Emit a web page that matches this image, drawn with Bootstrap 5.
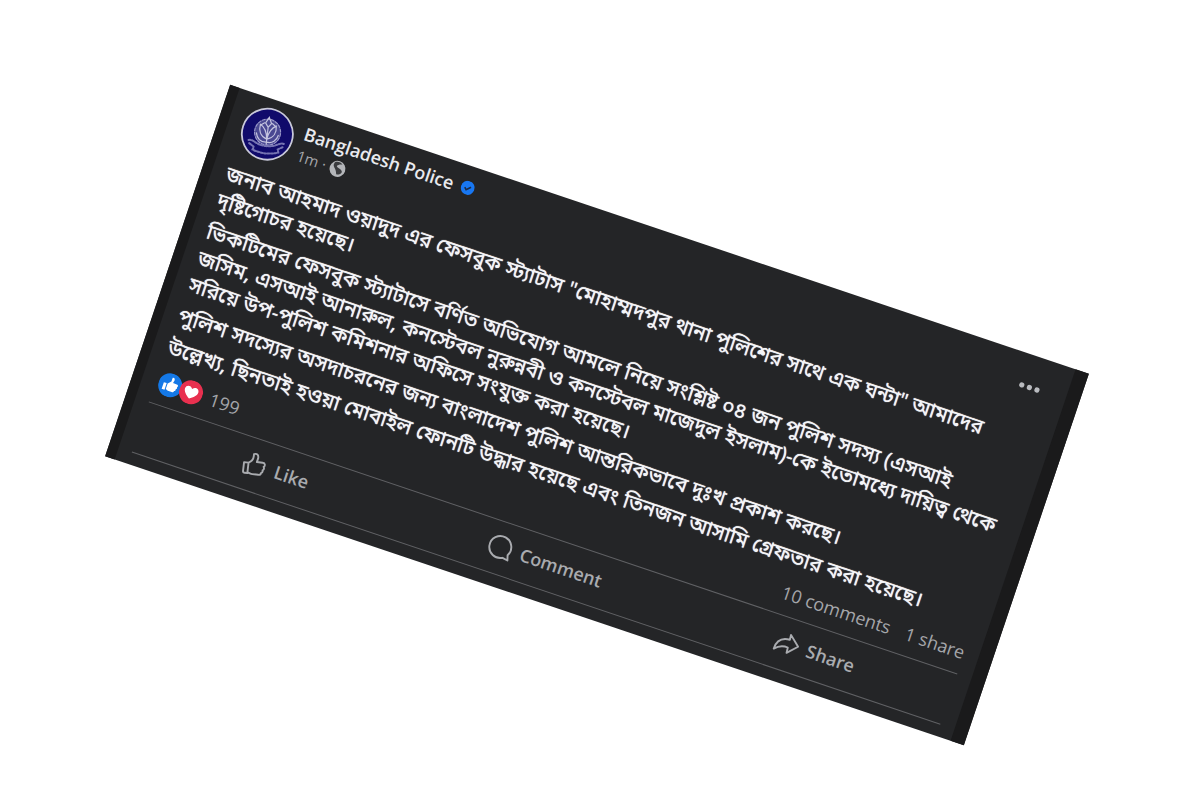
<!DOCTYPE html>
<html lang="bn">
<head>
<meta charset="utf-8">
<meta name="viewport" content="width=device-width, initial-scale=1">
<title>Bangladesh Police</title>
<link href="https://cdn.jsdelivr.net/npm/bootstrap@5.3.0/dist/css/bootstrap.min.css" rel="stylesheet">
<style>
body{background:#fff;font-family:"Open Sans","Noto Sans","Noto Sans Bengali",sans-serif;overflow:hidden}
.stage{padding-top:30px;padding-right:6px}
.post{width:76%;max-width:906px;flex:none;background:#242527;color:#e4e6eb;border-left:10px solid #1a1a1b;border-right:14px solid #1a1a1b;transform:rotate(18.6deg);padding:8px 15px 12px 14px}
.avatar{width:54px;height:54px}
.title{padding-top:2px}
.who{font-size:18px;font-weight:600;line-height:24px;color:#e9eaee;text-decoration:none;-webkit-text-stroke:1px transparent}
.muted{color:#a4a6aa}
.when{font-size:15px;font-weight:500;line-height:22px}
.more{margin-right:12px}
.story{font-size:21px;line-height:28px;margin-top:8px;white-space:nowrap;padding-left:1px;color:#f4f5f8;text-shadow:0 0 1px #f4f5f8}
.story p{margin-bottom:5px}
.counts{font-size:18px;line-height:24px;height:40px;padding-left:3px;padding-bottom:4px}
.counts a{color:inherit;text-decoration:none}
.heart{margin-left:-2px}
.actions{border-top:1px solid #606164;border-bottom:1px solid #606164;height:54px;padding-top:4px}
.act{font-size:18px;font-weight:600;line-height:24px;color:#a9abaf;background:none;border:0}
</style>
</head>
<body>
<main class="stage min-vh-100 d-flex align-items-center justify-content-center">
<article class="post">
  <header class="d-flex align-items-start">
    <svg class="avatar flex-shrink-0" viewBox="0 0 54 54" role="img" aria-label="Bangladesh Police emblem">
      <circle cx="27" cy="27" r="25.5" fill="#100a6b" stroke="#c9c9da" stroke-width="1.8"/>
      <g fill="none" stroke="#9a98c8" stroke-width="1.2" stroke-linecap="round" transform="rotate(-12 27 27)">
        <circle cx="27" cy="25" r="13" fill="#4a4892" stroke-dasharray="3 1.5"/>
        <path d="M27 10l-3 6 3 4 3-4zM27 20v17M27 32c-7-2-9-8-8-14 4 2 7 7 8 14zM27 32c7-2 9-8 8-14-4 2-7 7-8 14zM27 35c-6 1-10-3-11-8M27 35c6 1 10-3 11-8M23 16l-4 3M31 16l4 3" stroke="#c4c3df"/>
        <path d="M9 35c5-2 7 4 18 4s13-6 18-4M10 38l5 3-1 3c9 3 17 3 26 0l-1-3 5-3" stroke="#7674b2" stroke-width="2" stroke-dasharray="2 1.5"/>
      </g>
    </svg>
    <div class="title ms-2 flex-grow-1">
      <div class="d-flex align-items-center gap-2">
        <a href="#" class="who">Bangladesh Police</a>
        <svg width="14" height="14" viewBox="0 0 14 14" role="img" aria-label="Verified"><circle cx="7" cy="7" r="7" fill="#1877f2"/><path d="M4 7.2l2.1 2.1L10 5.3" fill="none" stroke="#1c2b45" stroke-width="1.6"/></svg>
      </div>
      <div class="when muted d-flex align-items-center gap-1">
        <span>1m</span><span>·</span>
        <svg width="17" height="17" viewBox="0 0 17 17" role="img" aria-label="Public"><circle cx="8.500" cy="8.500" r="8" fill="#b4b6ba"/><path d="M4 3c2-2 6-2 8 0-2 0-4 1-5 3 1 2 4 1 6 3s-1 5-4 5c-1-2-1-3-3-5S3 6 4 3z" fill="#3b3c3f"/></svg>
      </div>
    </div>
    <button type="button" class="more btn p-0 border-0 mt-2" aria-label="More options">
      <svg width="22" height="22" viewBox="0 0 22 22" fill="#b9bbbf"><circle cx="3" cy="13" r="2.600"/><circle cx="11" cy="13" r="2.600"/><circle cx="19" cy="13" r="2.600"/></svg>
    </button>
  </header>

  <div class="story">
    <p>জনাব আহমাদ ওয়াদুদ এর ফেসবুক স্ট্যাটাস "মোহাম্মদপুর থানা পুলিশের সাথে এক ঘন্টা" আমাদের<br>দৃষ্টিগোচর হয়েছে।</p>
    <p>ভিকটিমের ফেসবুক স্ট্যাটাসে বর্ণিত অভিযোগ আমলে নিয়ে সংশ্লিষ্ট ০৪ জন পুলিশ সদস্য (এসআই<br>জসিম, এসআই আনারুল, কনস্টেবল নুরুন্নবী ও কনস্টেবল মাজেদুল ইসলাম)-কে ইতোমধ্যে দায়িত্ব থেকে<br>সরিয়ে উপ-পুলিশ কমিশনার অফিসে সংযুক্ত করা হয়েছে।</p>
    <p>পুলিশ সদস্যের অসদাচরনের জন্য বাংলাদেশ পুলিশ আন্তরিকভাবে দুঃখ প্রকাশ করছে।</p>
    <p>উল্লেখ্য, ছিনতাই হওয়া মোবাইল ফোনটি উদ্ধার হয়েছে এবং তিনজন আসামি গ্রেফতার করা হয়েছে।</p>
  </div>

  <div class="counts muted d-flex align-items-center">
    <svg width="24" height="24" viewBox="0 0 24 24" role="img" aria-label="Like"><circle cx="12" cy="12" r="12" fill="#1478e6"/><path d="M5 11h3v7H5zM9 11l3-3V4c2-1 3 1 2.500 3L14 9h4c2 0 2 2 1 2.500 1 1 .5 2-.5 2.500.5 1 0 2-1 2.200 0 1.500-1 1.800-2 1.800h-4l-2.500-1z" fill="#fff"/></svg>
    <svg class="heart" width="24" height="24" viewBox="0 0 24 24" role="img" aria-label="Love"><circle cx="12" cy="12" r="12" fill="#e8304f"/><path d="M12 18.500C8 16 5 13 5 10c0-4 5-5 7-1.500C14 5 19 6 19 10c0 3-3 6-7 8.500z" fill="#fff"/></svg>
    <a href="#" class="ms-2 me-auto">199</a>
    <a href="#" class="me-3">10 comments</a>
    <a href="#">1 share</a>
  </div>

  <div class="actions row g-0 align-items-center">
    <div class="col-4 text-center"><button type="button" class="act d-inline-flex align-items-center gap-2 p-0">
      <svg width="26" height="26" viewBox="0 0 26 26" fill="none" stroke="#a9abaf" stroke-width="1.900" stroke-linejoin="round"><g transform="rotate(-12 13 13)"><path d="M2.500 12h4.500v10.500H4c-1 0-1.500-.5-1.500-1.500zM7 12c3-1.500 4.500-4 4.500-7V3c3-1.500 5 .5 4.500 4l-.8 3.500H21c3 0 3 3.200 1.500 4 1 1.500.3 3-.7 3.500.5 1.500-.2 2.600-1.300 3 0 1.500-1 2-2.500 2h-6c-2 0-3-1-5-1"/></g></svg>Like</button></div>
    <div class="col-4 text-center"><button type="button" class="act d-inline-flex align-items-center gap-2 p-0">
      <svg width="26" height="26" viewBox="0 0 26 26" fill="none" stroke="#a9abaf" stroke-width="1.900" stroke-linejoin="round"><path d="M22 18.500A11 11 0 1 0 18 22.500l5.500 1z"/></svg>Comment</button></div>
    <div class="col-4 text-center"><button type="button" class="act d-inline-flex align-items-center gap-2 p-0">
      <svg width="26" height="26" viewBox="0 0 26 26" fill="none" stroke="#a9abaf" stroke-width="1.900" stroke-linejoin="round"><path d="M14 3.500l10.500 9-9 9.500-.5-5.500c-5-.5-9 1-13 5.500C2 14 6 9 14.500 8.500z"/></svg>Share</button></div>
  </div>
</article>
</main>
<script src="https://cdn.jsdelivr.net/npm/bootstrap@5.3.0/dist/js/bootstrap.bundle.min.js"></script>
</body>
</html>
